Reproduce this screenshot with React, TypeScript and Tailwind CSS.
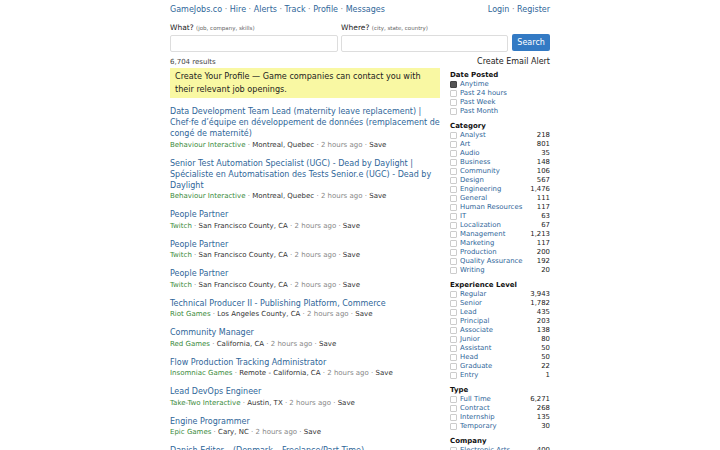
const JOBS = [
  {
    title:
      "Data Development Team Lead (maternity leave replacement) | Chef·fe d’équipe en développement de données (remplacement de congé de maternité)",
    company: "Behaviour Interactive",
    location: "Montreal, Quebec",
  },
  {
    title:
      "Senior Test Automation Specialist (UGC) - Dead by Daylight | Spécialiste en Automatisation des Tests Senior.e (UGC) - Dead by Daylight",
    company: "Behaviour Interactive",
    location: "Montreal, Quebec",
  },
  { title: "People Partner", company: "Twitch", location: "San Francisco County, CA" },
  { title: "People Partner", company: "Twitch", location: "San Francisco County, CA" },
  { title: "People Partner", company: "Twitch", location: "San Francisco County, CA" },
  {
    title: "Technical Producer II - Publishing Platform, Commerce",
    company: "Riot Games",
    location: "Los Angeles County, CA",
  },
  { title: "Community Manager", company: "Red Games", location: "California, CA" },
  {
    title: "Flow Production Tracking Administrator",
    company: "Insomniac Games",
    location: "Remote - California, CA",
  },
  { title: "Lead DevOps Engineer", company: "Take-Two Interactive", location: "Austin, TX" },
  { title: "Engine Programmer", company: "Epic Games", location: "Cary, NC" },
  {
    title: "Danish Editor – (Denmark – Freelance/Part Time)",
    company: "Keywords Studios",
    location: "Remote",
  },
];

const FILTERS = [
  {
    heading: "Date Posted",
    items: [
      { label: "Anytime", checked: true },
      { label: "Past 24 hours" },
      { label: "Past Week" },
      { label: "Past Month" },
    ],
  },
  {
    heading: "Category",
    items: [
      { label: "Analyst", count: "218" },
      { label: "Art", count: "801" },
      { label: "Audio", count: "35" },
      { label: "Business", count: "148" },
      { label: "Community", count: "106" },
      { label: "Design", count: "567" },
      { label: "Engineering", count: "1,476" },
      { label: "General", count: "111" },
      { label: "Human Resources", count: "117" },
      { label: "IT", count: "63" },
      { label: "Localization", count: "67" },
      { label: "Management", count: "1,213" },
      { label: "Marketing", count: "117" },
      { label: "Production", count: "200" },
      { label: "Quality Assurance", count: "192" },
      { label: "Writing", count: "20" },
    ],
  },
  {
    heading: "Experience Level",
    items: [
      { label: "Regular", count: "3,943" },
      { label: "Senior", count: "1,782" },
      { label: "Lead", count: "435" },
      { label: "Principal", count: "203" },
      { label: "Associate", count: "138" },
      { label: "Junior", count: "80" },
      { label: "Assistant", count: "50" },
      { label: "Head", count: "50" },
      { label: "Graduate", count: "22" },
      { label: "Entry", count: "1" },
    ],
  },
  {
    heading: "Type",
    items: [
      { label: "Full Time", count: "6,271" },
      { label: "Contract", count: "268" },
      { label: "Internship", count: "135" },
      { label: "Temporary", count: "30" },
    ],
  },
  {
    heading: "Company",
    items: [
      { label: "Electronic Arts", count: "400" },
      { label: "Ubisoft", count: "312" },
    ],
  },
];

const NAV = ["GameJobs.co", "Hire", "Alerts", "Track", "Profile", "Messages"];

type FilterItem = { label: string; count?: string; checked?: boolean };

export default function App() {
  return (
    <div
      className="h-[450px] overflow-hidden bg-white text-[#222]"
      style={{ fontFamily: '"DejaVu Sans", Verdana, sans-serif' }}
    >
      <div className="mx-auto w-[380px] pt-[4px]">
        {/* Top nav */}
        <div className="flex justify-between text-[8px] leading-[12px] text-[#2f6699]">
          <div>
            {NAV.map((n, i) => (
              <span key={n}>
                {i > 0 && <span className="text-[#888]"> · </span>}
                <a href="#">{n}</a>
              </span>
            ))}
          </div>
          <div>
            <a href="#">Login</a>
            <span className="text-[#888]"> · </span>
            <a href="#">Register</a>
          </div>
        </div>

        {/* Search */}
        <div className="mt-[7px] flex gap-[3px] items-end">
          <div className="w-[169px]">
            <div className="text-[7.5px] leading-[10px] text-[#222]">
              What? <span className="text-[5.5px] text-[#666]">(job, company, skills)</span>
            </div>
            <div className="mt-[2px] h-[17px] border border-[#ddd] rounded-[2px] bg-white" />
          </div>
          <div className="w-[168px]">
            <div className="text-[7.5px] leading-[10px] text-[#222]">
              Where? <span className="text-[5.5px] text-[#666]">(city, state, country)</span>
            </div>
            <div className="mt-[2px] h-[17px] border border-[#ddd] rounded-[2px] bg-white" />
          </div>
          <button className="ml-[1px] mb-[1px] h-[17px] w-[38px] rounded-[2px] bg-[#337ac4] text-white text-[8px]">
            Search
          </button>
        </div>

        <div className="mt-[5px] flex gap-[10px]">
          {/* Results */}
          <div className="w-[270px]">
            <div className="text-[7px] leading-[10px] text-[#444]">6,704 results</div>
            <div className="mt-[1px] bg-[#f9f8a3] px-[5px] py-[2px] text-[8.1px] leading-[13px] text-[#222]">
              Create Your Profile — Game companies can contact you with their relevant job openings.
            </div>
            <div className="mt-[8px] flex flex-col gap-[8px]">
              {JOBS.map((j, i) => (
                <div key={i}>
                  <a href="#" className="block text-[8px] leading-[11px] text-[#2f6699]">
                    {j.title}
                  </a>
                  <div className="mt-[0.5px] text-[7px] leading-[10px] text-[#888]">
                    <span className="text-[#3a8a3a]">{j.company}</span> ·{" "}
                    <span className="text-[#333]">{j.location}</span> · 2 hours ago ·{" "}
                    <span className="text-[#333]">Save</span>
                  </div>
                </div>
              ))}
            </div>
          </div>

          {/* Sidebar */}
          <div className="w-[100px]">
            <div className="text-right text-[8px] leading-[10px] text-[#222]">Create Email Alert</div>
            <div className="mt-[4px] flex flex-col gap-[6px]">
              {FILTERS.map((f) => (
                <div key={f.heading}>
                  <div className="text-[7px] leading-[9px] font-bold text-[#111]">{f.heading}</div>
                  {f.items.map((it: FilterItem) => (
                    <div key={it.label} className="flex items-center h-[9px] text-[6.9px]">
                      <span
                        className={
                          it.checked
                            ? "w-[7px] h-[7px] rounded-[1px] bg-[#555] border border-[#444]"
                            : "w-[7px] h-[7px] rounded-[1px] border border-[#ccc] bg-white"
                        }
                      />
                      <a href="#" className="ml-[3px] flex-1 text-[#2f6699]">
                        {it.label}
                      </a>
                      {it.count && <span className="text-[#222]">{it.count}</span>}
                    </div>
                  ))}
                </div>
              ))}
            </div>
          </div>
        </div>
      </div>
    </div>
  );
}
